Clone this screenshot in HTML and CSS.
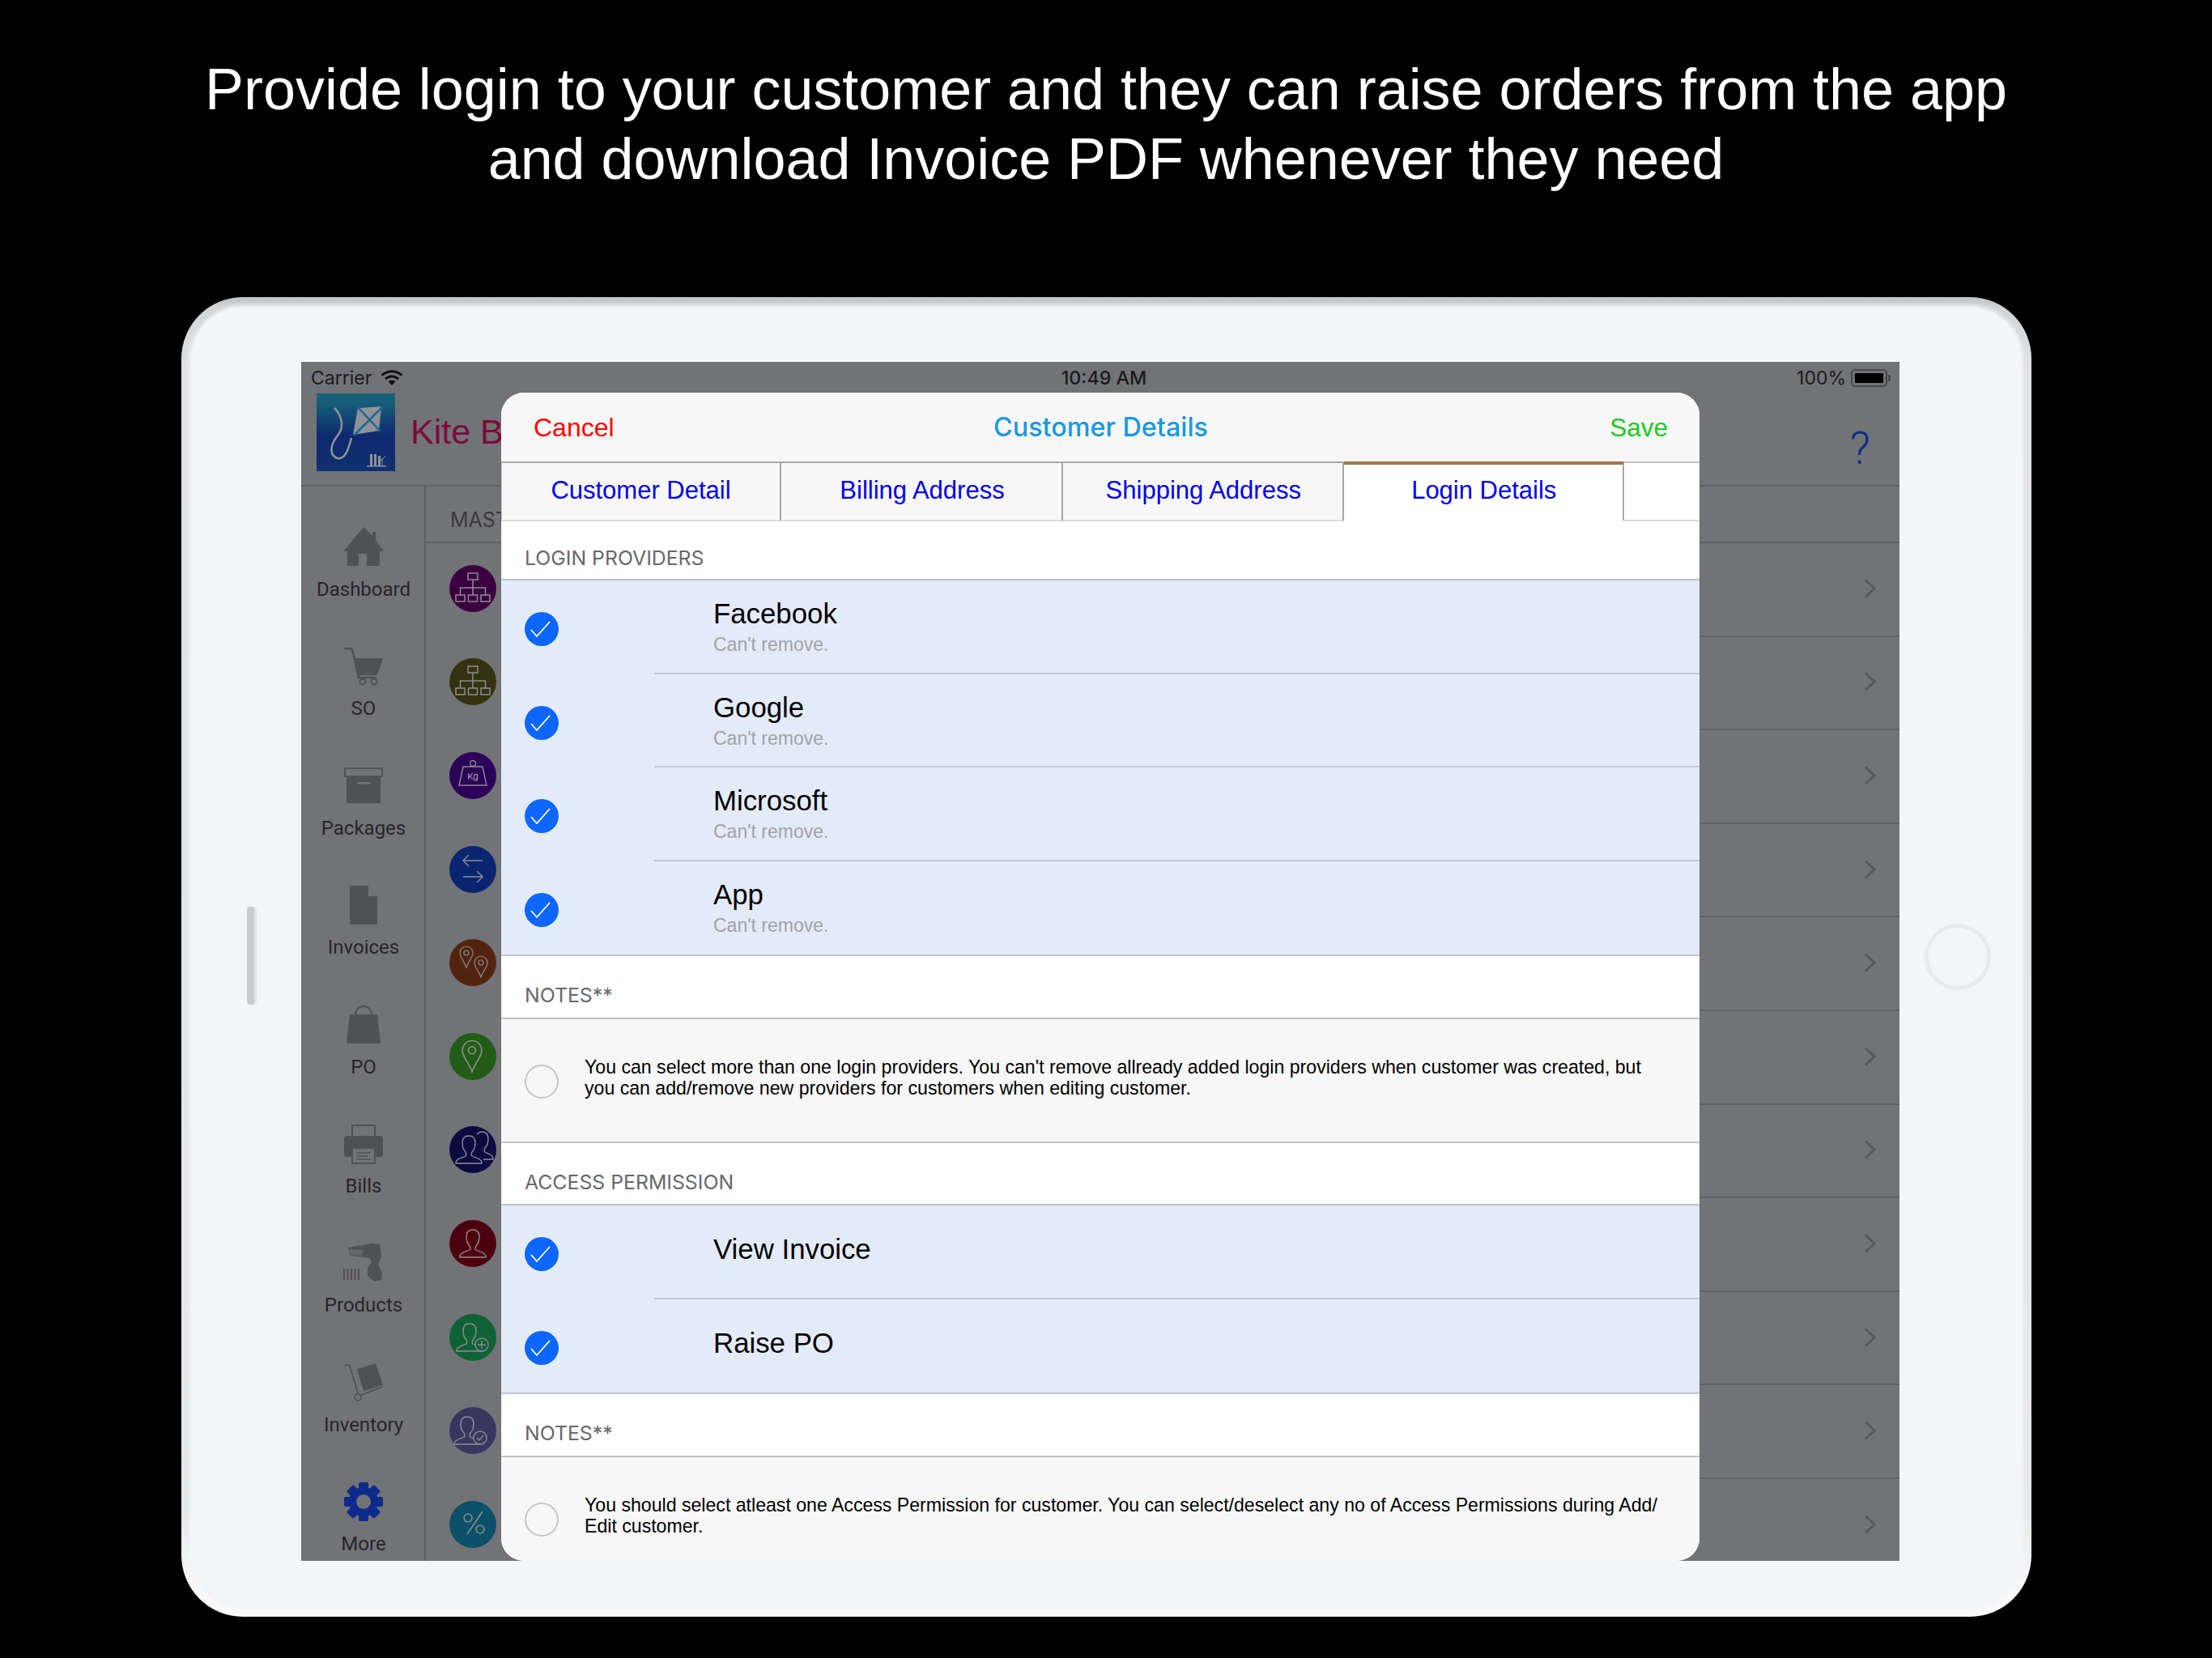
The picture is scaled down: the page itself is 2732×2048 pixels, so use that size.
FILE: index.html
```html
<!DOCTYPE html>
<html lang="en">
<head>
<meta charset="utf-8">
<title>Customer Details</title>
<link rel="stylesheet" href="styles.css">
</head>
<body>
<svg class="defs" width="0" height="0" aria-hidden="true">
  <symbol id="i-org" viewBox="0 0 58 58"><g fill="none" stroke="#8d8d92" stroke-width="1.5"><rect x="23" y="10" width="12" height="8"/><path d="M29 18v19M13.500 37v-9h31v9"/><rect x="8" y="37" width="11" height="8"/><rect x="23.500" y="37" width="11" height="8"/><rect x="39" y="37" width="11" height="8"/></g></symbol>
  <symbol id="i-person" viewBox="0 0 58 58"><path fill="none" stroke="#8d8d92" stroke-width="1.400" d="M13 46v-1c0-5 9-6 12-8 1-1 1-3 0-5-3-3-4-7-4-11 0-6 3-9 8-9s8 3 8 9c0 4-1 8-4 11-1 2-1 4 0 5 3 2 12 3 12 8v1z"/></symbol>
  <symbol id="i-chev" viewBox="0 0 15 24"><path fill="none" stroke="#56575b" stroke-width="3" d="M2 1.500 13 12 2 22.500"/></symbol>
  <symbol id="i-check" viewBox="0 0 42 42"><circle cx="21" cy="21" r="21" fill="#0d66ff"/><path fill="none" stroke="#fff" stroke-width="1.800" d="M8 22l7 8 16-18"/></symbol>
  <symbol id="i-pin" viewBox="-9 -1 18 29"><path fill="none" stroke="#8d8d92" stroke-width="1.100" d="M0 26C-2 19-8 14-8 8A8 8 0 0 1 8 8C8 14 2 19 0 26Z"/><circle cy="8" r="3" fill="none" stroke="#8d8d92" stroke-width="1.100"/></symbol>
</svg>

<header class="hero">
  <h1 class="headline">Provide login to your customer and they can raise orders from the app<br>and download Invoice PDF whenever they need</h1>
</header>

<main class="device">
  <div class="face">
    <span class="side-button"></span>
    <span class="home-button"></span>
    <section class="screen">
      <div class="status">
        <div class="status-left">
          <span>Carrier</span>
          <svg class="wifi" viewBox="0 0 28 19"><g fill="none" stroke="#111" stroke-width="3"><path d="M1.500 6.500Q14-3 26.500 6.500"/><path d="M6 11Q14 4.500 22 11"/></g><path fill="#111" d="M9.500 14Q14 11 18.500 14L14 19z"/></svg>
        </div>
        <span class="status-time">10:49 AM</span>
        <div class="status-right">
          <span>100%</span>
          <span class="battery"><span class="battery-fill"></span></span>
          <span class="battery-nub"></span>
        </div>
      </div>

      <div class="appbar">
        <svg class="logo" viewBox="0 0 97 96">
          <defs><linearGradient id="logo-grad" x1="0" y1="0" x2="0" y2="1"><stop offset="0.1" stop-color="#176079"/><stop offset="0.55" stop-color="#0e2a6e"/><stop offset="1" stop-color="#10306f"/></linearGradient></defs>
          <rect width="97" height="96" fill="url(#logo-grad)"/>
          <path fill="#8f9399" d="M51 18 80 16 77 46 45 51z"/>
          <path fill="none" stroke="#1a6a90" stroke-width="2.500" d="M51 17 79 47M81 17 46 52"/>
          <path fill="none" stroke="#8f9399" stroke-width="2.500" d="M22 18C32 28 34 42 26 52 18 62 14 76 26 80 36 82 40 66 43 55"/>
          <path fill="#8f9399" d="M66 75h3v14h-3zM71 75h3v14h-3zM76 77h3v12h-3zM62 89h24v1.500H62z"/>
          <path fill="none" stroke="#8f9399" stroke-width="1" d="M81 89V80M81 82l4-5M81 84l-3-4"/>
        </svg>
        <span class="brand">Kite B</span>
        <span class="help">?</span>
      </div>

      <div class="workspace">
        <nav class="sidebar">
          <a class="nav-item">
            <svg class="nav-icon" viewBox="0 0 50 50"><path fill="#505154" d="M25 0 36 11V6h4v10L50 30h-5v18H5V30H0z"/><rect x="19" y="33" width="10" height="15" fill="#727377"/></svg>
            <span>Dashboard</span>
          </a>
          <a class="nav-item">
            <svg class="nav-icon" viewBox="0 0 50 50"><path fill="none" stroke="#505154" stroke-width="2.500" d="M1 3h7c2 0 3 1 3.500 3L19 39h22"/><path fill="#505154" d="M13 15h36l-7 21H18z"/><circle cx="24" cy="44" r="3.500" fill="none" stroke="#505154" stroke-width="2"/><circle cx="38" cy="44" r="3.500" fill="none" stroke="#505154" stroke-width="2"/></svg>
            <span>SO</span>
          </a>
          <a class="nav-item">
            <svg class="nav-icon" viewBox="0 0 50 50"><rect x="2" y="3" width="46" height="10" fill="none" stroke="#505154" stroke-width="2"/><path fill="#505154" d="M4 13h42v33H4z"/><rect x="17" y="20" width="17" height="2.500" fill="#727377"/></svg>
            <span>Packages</span>
          </a>
          <a class="nav-item">
            <svg class="nav-icon" viewBox="0 0 50 50"><path fill="#505154" d="M8 1h22L42 15v34H8z"/><path fill="#727377" d="M31 2 41 14H31z"/></svg>
            <span>Invoices</span>
          </a>
          <a class="nav-item">
            <svg class="nav-icon" viewBox="0 0 50 50"><path fill="#505154" d="M8 12h34l4 36H4z"/><path fill="none" stroke="#505154" stroke-width="2" d="M15 16v-4a10 10 0 0 1 20 0v4"/></svg>
            <span>PO</span>
          </a>
          <a class="nav-item">
            <svg class="nav-icon" viewBox="0 0 50 50"><rect x="11" y="2" width="28" height="16" fill="none" stroke="#505154" stroke-width="2"/><path fill="#505154" d="M5 15h40a4 4 0 0 1 4 4v19a3 3 0 0 1-3 3h-6V32H10v9H4a3 3 0 0 1-3-3V19a4 4 0 0 1 4-4z"/><rect x="11" y="30" width="28" height="19" fill="#727377" stroke="#505154" stroke-width="2"/><path stroke="#505154" stroke-width="1.500" d="M16 36h18M16 40h14M16 44h18"/></svg>
            <span>Bills</span>
          </a>
          <a class="nav-item">
            <svg class="nav-icon" viewBox="0 0 50 50"><path fill="#505154" d="M6 6 35 1l10 1 2 15-4 10 5 10-1 9-9 2-8-7v-9l5-8-2-5-24-3z"/><path fill="#66676b" d="M8 8l17 1-2 7-14-1z"/><path stroke="#505154" stroke-width="2" d="M1 32v14M5.500 32v14M10 32v14M14.500 32v14M19 32v14"/></svg>
            <span>Products</span>
          </a>
          <a class="nav-item">
            <svg class="nav-icon" viewBox="0 0 50 50"><path fill="none" stroke="#505154" stroke-width="1.800" d="M1 5c2-3 5-3 7-1l10 34M20 41l28-11"/><circle cx="18" cy="43" r="4" fill="none" stroke="#505154" stroke-width="1.800"/><path fill="#505154" d="M17 8 40 1l9 27-24 7z"/></svg>
            <span>Inventory</span>
          </a>
          <a class="nav-item">
            <svg class="nav-icon" viewBox="0 0 50 50"><g fill="#0f2a8c"><rect x="19" y="1" width="12" height="48" rx="2"/><rect x="19" y="1" width="12" height="48" rx="2" transform="rotate(45 25 25)"/><rect x="19" y="1" width="12" height="48" rx="2" transform="rotate(90 25 25)"/><rect x="19" y="1" width="12" height="48" rx="2" transform="rotate(135 25 25)"/><circle cx="25" cy="25" r="18"/></g><circle cx="25" cy="25" r="9" fill="#727377"/></svg>
            <span>More</span>
          </a>
        </nav>

        <div class="masters">
          <div class="masters-head">MAST</div>
          <div class="list-row"><span class="disc disc-plum"><svg viewBox="0 0 58 58"><use href="#i-org"/></svg></span><div class="row-body"><svg class="chev"><use href="#i-chev"/></svg></div></div>
          <div class="list-row"><span class="disc disc-olive"><svg viewBox="0 0 58 58"><use href="#i-org"/></svg></span><div class="row-body"><svg class="chev"><use href="#i-chev"/></svg></div></div>
          <div class="list-row"><span class="disc disc-violet"><svg viewBox="0 0 58 58"><g fill="none" stroke="#8d8d92" stroke-width="1.400"><circle cx="29" cy="14" r="3.500"/><path d="M17 18h24l5 23H12z"/></g><text x="29" y="34" class="kg">Kg</text></svg></span><div class="row-body"><svg class="chev"><use href="#i-chev"/></svg></div></div>
          <div class="list-row"><span class="disc disc-blue"><svg viewBox="0 0 58 58"><path fill="none" stroke="#8d8d92" stroke-width="1.400" d="M41 18H17M24 11l-7 7 7 7M17 38h24M34 31l7 7-7 7"/></svg></span><div class="row-body"><svg class="chev"><use href="#i-chev"/></svg></div></div>
          <div class="list-row"><span class="disc disc-brown"><svg viewBox="0 0 58 58"><use href="#i-pin" x="12" y="8" width="18" height="29"/><use href="#i-pin" x="30" y="20" width="18" height="29"/></svg></span><div class="row-body"><svg class="chev"><use href="#i-chev"/></svg></div></div>
          <div class="list-row"><span class="disc disc-green"><svg viewBox="0 0 58 58"><use href="#i-pin" x="14" y="8" width="28" height="43"/></svg></span><div class="row-body"><svg class="chev"><use href="#i-chev"/></svg></div></div>
          <div class="list-row"><span class="disc disc-navy"><svg viewBox="0 0 58 58"><use href="#i-person" x="-5" y="0" width="58" height="58"/><path fill="none" stroke="#8d8d92" stroke-width="1.400" d="M34 10c2-2 4-3 6-3 5 0 8 3 8 9 0 4-1 8-4 11-1 2-1 4 0 5 3 2 10 3 10 8v1H42"/></svg></span><div class="row-body"><svg class="chev"><use href="#i-chev"/></svg></div></div>
          <div class="list-row"><span class="disc disc-red"><svg viewBox="0 0 58 58"><use href="#i-person"/></svg></span><div class="row-body"><svg class="chev"><use href="#i-chev"/></svg></div></div>
          <div class="list-row"><span class="disc disc-emerald"><svg viewBox="0 0 58 58"><use href="#i-person" x="-4" y="0" width="58" height="58"/><circle cx="40" cy="38" r="8" fill="#0f6236" stroke="#8d8d92" stroke-width="1.400"/><path stroke="#8d8d92" stroke-width="1.400" d="M40 33v10M35 38h10"/></svg></span><div class="row-body"><svg class="chev"><use href="#i-chev"/></svg></div></div>
          <div class="list-row"><span class="disc disc-slate"><svg viewBox="0 0 58 58"><use href="#i-person" x="-7" y="0" width="58" height="58"/><circle cx="38" cy="38" r="8" fill="#3a365f" stroke="#8d8d92" stroke-width="1.400"/><path fill="none" stroke="#8d8d92" stroke-width="1.400" d="M34 38l3 3 5-6"/></svg></span><div class="row-body"><svg class="chev"><use href="#i-chev"/></svg></div></div>
          <div class="list-row"><span class="disc disc-teal"><svg viewBox="0 0 58 58"><g fill="none" stroke="#8d8d92" stroke-width="1.500"><circle cx="23" cy="21" r="5"/><circle cx="38" cy="35" r="5"/><path d="M41 13 22 41"/></g></svg></span><div class="row-body"><svg class="chev"><use href="#i-chev"/></svg></div></div>
        </div>
      </div>

      <div class="modal">
        <div class="modal-bar">
          <span class="act-cancel">Cancel</span>
          <span class="modal-title">Customer Details</span>
          <span class="act-save">Save</span>
        </div>
        <div class="tabs">
          <span class="tab">Customer Detail</span>
          <span class="tab">Billing Address</span>
          <span class="tab">Shipping Address</span>
          <span class="tab tab-active">Login Details</span>
          <span class="tab-rest"></span>
        </div>

        <div class="section-head section-head-first">LOGIN PROVIDERS</div>
        <div class="group">
          <div class="opt"><svg class="tick"><use href="#i-check"/></svg><div class="opt-body"><div class="opt-title">Facebook</div><div class="opt-sub">Can't remove.</div></div></div>
          <div class="opt"><svg class="tick"><use href="#i-check"/></svg><div class="opt-body"><div class="opt-title">Google</div><div class="opt-sub">Can't remove.</div></div></div>
          <div class="opt"><svg class="tick"><use href="#i-check"/></svg><div class="opt-body"><div class="opt-title">Microsoft</div><div class="opt-sub">Can't remove.</div></div></div>
          <div class="opt"><svg class="tick"><use href="#i-check"/></svg><div class="opt-body"><div class="opt-title">App</div><div class="opt-sub">Can't remove.</div></div></div>
        </div>

        <div class="section-head">NOTES**</div>
        <div class="note"><span class="radio"></span><p class="note-text">You can select more than one login providers. You can't remove allready added login providers when customer was created, but<br>you can add/remove new providers for customers when editing customer.</p></div>

        <div class="section-head section-head-ruled">ACCESS PERMISSION</div>
        <div class="group">
          <div class="opt"><svg class="tick"><use href="#i-check"/></svg><div class="opt-body opt-body-single"><div class="opt-title">View Invoice</div></div></div>
          <div class="opt"><svg class="tick"><use href="#i-check"/></svg><div class="opt-body opt-body-single"><div class="opt-title">Raise PO</div></div></div>
        </div>

        <div class="section-head">NOTES**</div>
        <div class="note"><span class="radio"></span><p class="note-text">You should select atleast one Access Permission for customer. You can select/deselect any no of Access Permissions during Add/<br>Edit customer.</p></div>
      </div>
    </section>
  </div>
</main>
</body>
</html>
```
FILE: styles.css
```css
* { box-sizing: border-box; }
html, body { margin: 0; padding: 0; }
body {
  width: 2732px;
  height: 2048px;
  overflow: hidden;
  background: #000;
  font-family: "Liberation Sans", Arial, sans-serif;
}
.defs { position: absolute; }

.hero { height: 367px; padding-top: 67px; }
.headline {
  margin: 0;
  color: #fff;
  font-weight: 400;
  font-size: 71.900px;
  line-height: 86px;
  text-align: center;
}

.device {
  width: 2285px;
  height: 1630px;
  margin-left: 224px;
  padding: 12px 12px 10px;
  border-radius: 76px;
  background: linear-gradient(#bfc1c3, #d2d4d6 12px, #e0e1e3 90px, #e6e7e9 92%, #fbfcfa 99%);
}
.face {
  position: relative;
  height: 100%;
  padding: 68px 0 0 136px;
  border-radius: 66px;
  background: #f4f5f8;
  box-shadow: 0 0 5px 2px #f4f5f8;
}
.side-button {
  position: absolute;
  left: 69px;
  top: 741px;
  width: 12px;
  height: 121px;
  border-radius: 4px;
  background: #c8cacd;
  border-right: 3px solid #e4e5e7;
}
.home-button {
  position: absolute;
  left: 2141px;
  top: 762px;
  width: 82px;
  height: 82px;
  border-radius: 50%;
  border: 5px solid #e8e9eb;
}

.screen {
  position: relative;
  width: 1974px;
  height: 1481px;
  overflow: hidden;
  background: #727377;
  color: #1b1b1d;
}

.status {
  display: grid;
  grid-template-columns: 1fr auto 1fr;
  align-items: center;
  height: 39px;
  padding: 0 11px 0 12px;
  font-family: Inter, sans-serif;
  font-size: 23px;
}
.status-left { display: flex; align-items: center; gap: 11px; }
.wifi { width: 28px; height: 19px; }
.status-time { margin-left: 8px; font-size: 23.300px; font-weight: 500; }
.status-right { display: flex; justify-content: flex-end; align-items: center; }
.battery {
  display: block;
  width: 45px;
  height: 22px;
  margin-left: 6px;
  padding: 3px;
  border: 2px solid #48494c;
  border-radius: 5px;
}
.battery-fill { display: block; height: 100%; background: #000; border-radius: 1px; }
.battery-nub { width: 3px; height: 8px; margin-left: 1px; background: #48494c; border-radius: 0 2px 2px 0; }

.appbar {
  display: flex;
  align-items: center;
  height: 115px;
  padding: 0 36px 18px 19px;
  border-bottom: 2px solid #5e5f63;
}
.logo { width: 97px; height: 96px; flex: none; }
.brand { margin-left: 19px; color: #7d0a3a; font-size: 43px; }
.help {
  margin-left: auto;
  padding-top: 40px;
  color: #0e2d87;
  font-family: Roboto, sans-serif;
  font-weight: 300;
  font-size: 56px;
  line-height: 50px;
}

.workspace { display: flex; height: 1327px; }
.sidebar {
  flex: none;
  width: 154px;
  padding: 44px 0 0 2px;
  border-right: 2px solid #5e5f63;
}
.nav-item {
  display: flex;
  flex-direction: column;
  align-items: center;
  height: 147.400px;
  font-family: Roboto, sans-serif;
  font-size: 24px;
  line-height: 30px;
  color: #26262a;
}
.nav-icon { width: 50px; height: 50px; margin: 6px 0 12px; flex: none; }

.masters { flex: 1; }
.masters-head {
  height: 70px;
  padding: 26px 0 0 30px;
  border-bottom: 2px solid #5e5f63;
  font-family: Inter, sans-serif;
  font-size: 25px;
  line-height: 30px;
  color: #3a3a3d;
}
.list-row { display: flex; align-items: center; height: 115.600px; padding-left: 29px; }
.disc { flex: none; width: 58px; height: 58px; margin-top: -4px; border-radius: 50%; }
.disc svg { display: block; width: 58px; height: 58px; }
.disc-plum { background: #3a0040; }
.disc-olive { background: #33330f; }
.disc-violet { background: #2c0058; }
.disc-blue { background: #0a2570; }
.disc-brown { background: #522410; }
.disc-green { background: #225c16; }
.disc-navy { background: #0b0b42; }
.disc-red { background: #4c000e; }
.disc-emerald { background: #0f6236; }
.disc-slate { background: #3a365f; }
.disc-teal { background: #0c5069; }
.kg { font-family: Inter, sans-serif; font-size: 11px; fill: #a5a5a9; text-anchor: middle; }
.row-body {
  display: flex;
  flex: 1;
  align-items: center;
  justify-content: flex-end;
  height: 100%;
  margin-left: 40px;
  padding: 0 29px 2px 0;
  border-bottom: 2px solid #606165;
}
.chev { width: 15px; height: 24px; }

.modal {
  position: absolute;
  left: 247px;
  top: 38px;
  bottom: 0;
  width: 1480px;
  overflow: hidden;
  border-radius: 28px;
  background: #fff;
}
.modal-bar {
  display: grid;
  grid-template-columns: 1fr auto 1fr;
  align-items: center;
  height: 85px;
  padding: 0 39px 0 40px;
  background: #f7f7f7;
  font-size: 32px;
}
.act-cancel, .act-save { padding-top: 1px; }
.act-cancel { color: #f00; }
.act-save { color: #1ec81e; font-size: 31.500px; text-align: right; }
.modal-title { color: #1a98e0; font-family: Inter, sans-serif; font-weight: 500; font-size: 32.300px; }

.tabs { display: flex; height: 74px; }
.tab {
  display: flex;
  align-items: center;
  justify-content: center;
  flex: none;
  width: 346.500px;
  padding: 0 0 3px 2px;
  border-top: 2px solid #a9a9a9;
  border-right: 2px solid #a5a5a5;
  border-bottom: 2px solid #dcdcdc;
  background: #f7f7f7;
  color: #00e;
  font-size: 31px;
}
.tab:first-child { width: 346px; padding-left: 0; border-left: 1px solid #c4c4c4; }
.tab:nth-child(2) { width: 348px; }
.tab-active {
  padding-bottom: 5px;
  border-top: 4px solid #a07850;
  border-bottom: 2px solid #fff;
  background: #fff;
}
.tab-rest { flex: 1; border-top: 2px solid #c4c4c4; border-bottom: 2px solid #dcdcdc; }

.section-head {
  height: 78px;
  padding: 33px 0 0 29px;
  border-bottom: 2px solid #bcc0c8;
  font-family: Inter, sans-serif;
  font-size: 24.800px;
  line-height: 30px;
  color: #67676c;
}
.section-head-first { height: 73px; padding-top: 30px; }
.section-head-ruled { height: 77px; }

.group { border-bottom: 2px solid #c2c7d2; background: #e4ebf8; }
.opt { display: flex; height: 115.500px; padding-left: 29px; }
.opt:last-child .opt-body { border-bottom: 0; }
.tick { flex: none; width: 42px; height: 42px; margin-top: 39px; }
.opt-body {
  flex: 1;
  margin-left: 118px;
  padding: 21px 0 0 73px;
  border-bottom: 2px solid #bfc6d6;
}
.opt-body-single { padding-top: 34px; }
.opt-title { color: #000; font-size: 34.800px; line-height: 40px; }
.opt-sub { margin-top: 3px; color: #a0a3a8; font-size: 23px; line-height: 30px; }

.note { display: flex; height: 153px; padding-left: 29px; border-bottom: 2px solid #c4c4c8; background: #f7f7f7; }
.radio { flex: none; width: 42px; height: 42px; margin-top: 56px; border: 2px solid #c3c3c9; border-radius: 50%; }
.note-text { margin: 46px 0 0 32px; color: #000; font-size: 23.120px; line-height: 26px; white-space: nowrap; }
```
